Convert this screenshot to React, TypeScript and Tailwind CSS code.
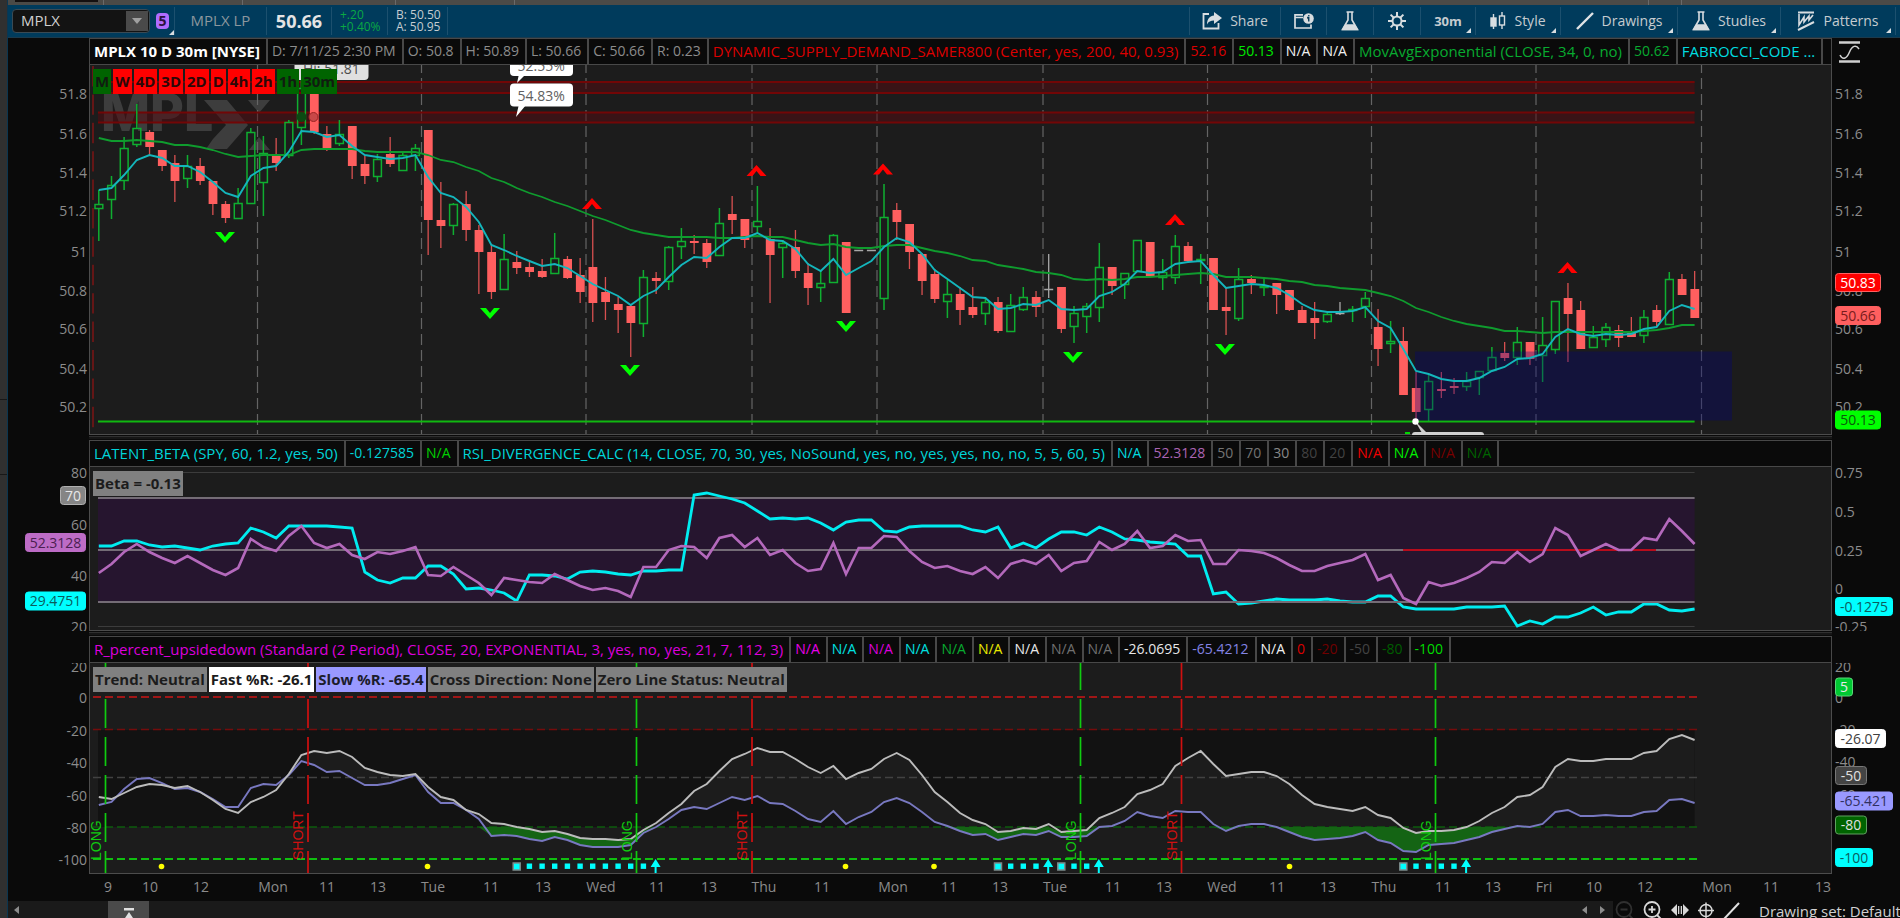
import React, { useState } from "react";

type Kind = "g" | "r" | "n";
// high, body top, body bottom, low, kind
type Candle = [number, number, number, number, Kind];

const X0 = 98.8;
const STEP = 12.665;
const px = (i: number) => Math.round((X0 + i * STEP) * 10) / 10;
const LAST = px(126);

const CANDLES: Candle[] = [
  [190, 204, 209, 241, "g"], [176, 185, 200, 219, "g"], [137, 148, 181, 190, "g"], [104, 128, 145, 147, "g"],
  [130, 132, 147, 156, "r"], [150, 150, 166, 171, "r"], [155, 163, 181, 202, "r"], [155, 166, 179, 188, "g"],
  [158, 166, 181, 185, "r"], [181, 181, 204, 215, "r"], [201, 204, 218, 223, "r"], [188, 203, 219, 219, "g"],
  [128, 132, 204, 204, "g"], [136, 153, 183, 216, "g"], [138, 156, 163, 171, "r"], [120, 122, 156, 158, "g"],
  [80, 88, 128, 145, "g"], [84, 91, 132, 134, "r"], [126, 134, 148, 151, "r"], [120, 134, 144, 146, "g"],
  [126, 126, 166, 179, "r"], [156, 164, 176, 184, "r"], [154, 159, 177, 182, "g"], [137, 154, 164, 167, "r"],
  [151, 155, 171, 171, "g"], [144, 148, 156, 171, "g"], [130, 130, 220, 255, "r"], [182, 220, 226, 248, "r"],
  [203, 204, 226, 235, "g"], [191, 204, 230, 241, "r"], [225, 230, 252, 294, "r"], [245, 252, 292, 299, "r"],
  [234, 259, 290, 290, "g"], [251, 262, 268, 274, "r"], [260, 267, 272, 277, "r"], [259, 271, 277, 278, "r"],
  [233, 258, 274, 274, "g"], [256, 259, 278, 279, "r"], [258, 275, 292, 303, "r"], [219, 267, 303, 322, "r"],
  [277, 292, 302, 320, "r"], [297, 304, 310, 333, "r"], [304, 306, 323, 357, "r"], [270, 277, 324, 337, "g"],
  [272, 278, 281, 294, "r"], [246, 247, 282, 290, "g"], [228, 241, 247, 259, "g"], [235, 241, 243, 254, "r"],
  [239, 243, 262, 268, "r"], [208, 223, 256, 256, "g"], [196, 214, 220, 234, "r"], [219, 219, 240, 248, "r"],
  [186, 221, 227, 233, "g"], [228, 239, 255, 303, "r"], [240, 243, 248, 278, "g"], [230, 247, 271, 278, "r"],
  [263, 273, 288, 305, "r"], [270, 283, 288, 302, "g"], [234, 235, 283, 283, "g"], [242, 242, 313, 313, "r"],
  [250, 250, 251, 251, "n"], [250, 250, 251, 251, "n"], [184, 217, 299, 310, "g"], [203, 210, 222, 240, "r"],
  [224, 224, 252, 269, "r"], [253, 254, 281, 295, "r"], [269, 274, 299, 303, "r"], [280, 294, 302, 318, "g"],
  [287, 294, 310, 325, "r"], [287, 307, 315, 318, "r"], [297, 302, 314, 325, "g"], [297, 302, 331, 333, "r"],
  [294, 305, 332, 332, "g"], [287, 297, 310, 311, "g"], [291, 297, 307, 317, "r"], [254, 289, 290, 298, "n"],
  [287, 287, 329, 333, "r"], [306, 313, 327, 343, "g"], [303, 306, 317, 333, "g"], [243, 267, 308, 322, "g"],
  [267, 267, 286, 295, "r"], [273, 273, 285, 299, "g"], [240, 240, 272, 272, "g"], [242, 242, 277, 277, "r"],
  [259, 272, 278, 290, "g"], [235, 246, 278, 284, "g"], [242, 246, 261, 263, "r"], [254, 259, 260, 284, "g"],
  [258, 258, 310, 310, "r"], [287, 307, 311, 335, "r"], [268, 279, 319, 321, "g"], [275, 279, 283, 294, "r"],
  [277, 286, 287, 296, "g"], [283, 283, 295, 314, "r"], [290, 290, 310, 311, "r"], [306, 310, 323, 323, "r"],
  [302, 318, 323, 339, "r"], [313, 314, 322, 323, "g"], [302, 313, 314, 315, "n"], [306, 309, 311, 322, "g"],
  [292, 298, 307, 318, "g"], [309, 327, 349, 366, "r"], [321, 341, 344, 353, "g"], [327, 341, 395, 395, "r"],
  [372, 388, 412, 421, "r"], [375, 381, 410, 421, "g"], [372, 389, 391, 398, "r"], [378, 386, 388, 394, "r"],
  [372, 381, 387, 391, "g"], [371, 371, 378, 395, "g"], [347, 357, 371, 371, "g"], [342, 353, 358, 361, "r"],
  [327, 342, 358, 365, "g"], [342, 342, 359, 365, "r"], [317, 345, 356, 382, "g"], [301, 301, 350, 354, "g"],
  [283, 298, 314, 362, "r"], [301, 310, 349, 349, "r"], [326, 337, 348, 348, "g"], [323, 327, 340, 347, "g"],
  [325, 330, 338, 347, "r"], [317, 333, 337, 337, "r"], [310, 317, 336, 343, "g"], [305, 310, 322, 327, "r"],
  [272, 279, 325, 325, "g"], [274, 279, 295, 295, "r"], [271, 289, 318, 318, "r"],
];

const FAST_MA = [
  190, 188, 175, 160, 155, 158, 166, 166, 172, 182, 193, 197, 176, 168, 166, 152, 131, 132, 137, 135, 146, 155, 157,
  159, 158, 155, 177, 193, 197, 207, 222, 245, 250, 256, 261, 266, 264, 268, 276, 284, 290, 296, 305, 296, 290, 277,
  265, 257, 258, 247, 238, 238, 233, 240, 241, 249, 264, 271, 259, 275, 268, 261, 247, 238, 242, 254, 270, 279, 288,
  297, 298, 309, 308, 304, 305, 300, 309, 310, 309, 296, 292, 284, 271, 273, 272, 264, 262, 261, 275, 288, 286, 284,
  285, 288, 295, 304, 310, 312, 312, 311, 307, 321, 328, 349, 371, 374, 379, 381, 381, 378, 371, 367, 359, 358, 354,
  337, 329, 334, 336, 334, 335, 334, 329, 327, 311, 305, 309,
];

const SLOW_MA = [
  138, 141, 141, 140, 141, 142, 145, 145, 147, 150, 154, 157, 156, 155, 155, 155, 150, 149, 149, 149, 149, 151, 152,
  152, 152, 152, 155, 160, 162, 167, 171, 178, 182, 188, 193, 197, 202, 206, 211, 216, 220, 225, 230, 233, 235, 237,
  237, 237, 237, 238, 238, 237, 236, 237, 237, 240, 243, 245, 244, 247, 248, 248, 246, 245, 245, 248, 251, 253, 256,
  260, 261, 265, 267, 269, 272, 273, 275, 279, 280, 279, 280, 279, 277, 277, 276, 275, 274, 273, 274, 277, 277, 277,
  278, 279, 281, 282, 285, 286, 288, 289, 290, 293, 296, 301, 308, 312, 317, 321, 324, 326, 328, 331, 331, 332, 333,
  332, 332, 332, 332, 332, 332, 332, 331, 330, 328, 325, 325,
];

const BETA = [
  546, 546, 541, 541, 545, 547, 546, 548, 550, 546, 544, 543, 528, 532, 538, 526, 526, 526, 526, 527, 528, 572, 580,
  583, 578, 578, 566, 566, 574, 589, 588, 590, 593, 601, 575, 575, 576, 579, 572, 571, 572, 574, 575, 571, 571, 570,
  570, 495, 493, 496, 499, 503, 511, 519, 518, 519, 518, 523, 530, 522, 520, 520, 531, 532, 527, 526, 526, 526, 526,
  530, 532, 527, 548, 543, 548, 539, 532, 532, 535, 527, 532, 539, 540, 542, 543, 544, 556, 556, 594, 592, 604, 603,
  601, 599, 600, 600, 600, 599, 601, 602, 602, 596, 596, 607, 609, 609, 609, 609, 607, 607, 607, 606, 626, 621, 624,
  617, 617, 613, 607, 615, 612, 612, 604, 604, 610, 611, 609,
];

const RSI = [
  573, 564, 552, 544, 552, 558, 563, 556, 563, 570, 575, 568, 539, 547, 551, 536, 526, 543, 548, 544, 555, 559, 552,
  554, 551, 547, 575, 576, 567, 575, 583, 595, 578, 580, 582, 583, 574, 580, 586, 590, 588, 591, 597, 567, 567, 550,
  546, 547, 558, 538, 535, 547, 538, 555, 550, 563, 571, 569, 543, 574, 548, 548, 536, 537, 551, 562, 568, 566, 571,
  574, 567, 578, 564, 560, 564, 555, 571, 563, 561, 542, 550, 544, 531, 548, 546, 535, 541, 540, 564, 564, 550, 551,
  553, 558, 565, 571, 571, 566, 563, 560, 554, 580, 575, 598, 604, 582, 586, 583, 578, 572, 562, 563, 552, 562, 554,
  528, 535, 556, 550, 544, 550, 550, 538, 540, 519, 531, 544,
];

const R_FAST = [
  797, 799, 793, 787, 784, 785, 788, 786, 792, 800, 809, 813, 802, 797, 790, 774, 755, 751, 753, 751, 757, 768, 772,
  775, 776, 774, 787, 797, 800, 810, 814, 823, 824, 827, 829, 832, 831, 834, 838, 839, 839, 840, 839, 830, 823, 813,
  804, 791, 784, 771, 759, 754, 748, 752, 752, 759, 767, 773, 766, 779, 773, 769, 759, 753, 760, 775, 792, 802, 813,
  820, 824, 832, 831, 828, 829, 824, 832, 831, 830, 818, 813, 807, 794, 790, 784, 766, 758, 751, 764, 776, 774, 772,
  772, 776, 784, 795, 804, 807, 809, 811, 807, 815, 818, 828, 833, 831, 831, 830, 827, 821, 813, 807, 797, 795, 787,
  767, 759, 761, 761, 759, 759, 759, 753, 751, 739, 735, 740,
];

const R_SLOW = [
  805, 802, 789, 779, 778, 783, 789, 788, 792, 799, 807, 807, 788, 784, 785, 775, 761, 765, 772, 771, 778, 785, 785,
  783, 779, 775, 792, 803, 803, 810, 819, 836, 835, 836, 839, 841, 837, 840, 845, 847, 847, 847, 845, 833, 827, 819,
  810, 807, 809, 803, 797, 800, 796, 803, 804, 811, 819, 822, 811, 824, 817, 812, 802, 798, 803, 812, 822, 826, 831,
  835, 834, 840, 837, 834, 835, 831, 837, 837, 836, 827, 826, 821, 812, 816, 818, 811, 812, 812, 824, 831, 826, 824,
  824, 827, 832, 837, 840, 839, 838, 836, 832, 840, 843, 851, 852, 845, 844, 843, 840, 837, 832, 829, 826, 827, 824,
  812, 810, 816, 816, 815, 816, 816, 812, 811, 800, 799, 803,
];

const DAY_LINES = [257.5, 421.5, 586, 752, 877, 1043, 1207.5, 1371.5, 1536, 1701.5];
const PRICE_TICKS: [string, number][] = [
  ["51.8", 94], ["51.6", 134], ["51.4", 173], ["51.2", 211], ["51", 252], ["50.8", 291], ["50.6", 329], ["50.4", 369], ["50.2", 407],
];
const UPS = [[592, 198], [756.5, 165], [883, 163.5], [1175, 214], [1567.5, 262]];
const DOWNS = [[225, 243], [490, 319], [630, 376], [846, 332], [1073, 363], [1225, 355]];
const TIMES: [string, number][] = [
  ["9", 108], ["10", 150], ["12", 201], ["Mon", 273], ["11", 327], ["13", 378], ["Tue", 433], ["11", 491], ["13", 543],
  ["Wed", 601], ["11", 657], ["13", 709], ["Thu", 764], ["11", 822], ["Mon", 893], ["11", 949], ["13", 1000],
  ["Tue", 1055], ["11", 1113], ["13", 1164], ["Wed", 1222], ["11", 1277], ["13", 1328], ["Thu", 1384], ["11", 1443],
  ["13", 1493], ["Fri", 1544], ["10", 1594], ["12", 1645], ["Mon", 1717], ["11", 1771], ["13", 1823],
];

type Cell = [string, string];
const PRICE_CELLS: Cell[] = [
  ["MPLX 10 D 30m [NYSE]", "text-[15px] text-white font-bold"],
  ["D: 7/11/25 2:30 PM", "text-[#8c8c8c]"],
  ["O: 50.8", "text-[#8c8c8c]"],
  ["H: 50.89", "text-[#8c8c8c]"],
  ["L: 50.66", "text-[#8c8c8c]"],
  ["C: 50.66", "text-[#8c8c8c]"],
  ["R: 0.23", "text-[#8c8c8c]"],
  ["DYNAMIC_SUPPLY_DEMAND_SAMER800 (Center, yes, 200, 40, 0.93)", "text-[15px] text-[#dc0000]"],
  ["52.16", "text-[#dc0000]"],
  ["50.13", "text-[#00e800]"],
  ["N/A", "text-[#f0f0f0]"],
  ["N/A", "text-[#f0f0f0]"],
  ["MovAvgExponential (CLOSE, 34, 0, no)", "text-[15px] text-[#08aa30]"],
  ["50.62", "text-[#08aa30]"],
  ["FABROCCI_CODE ...", "text-[15px] text-[#00dce0]"],
];
const RSI_CELLS: Cell[] = [
  ["LATENT_BETA (SPY, 60, 1.2, yes, 50)", "text-[15px] text-[#00d4d8]"],
  ["-0.127585", "text-[#00d4d8]"],
  ["N/A", "text-[#00d000]"],
  ["RSI_DIVERGENCE_CALC (14, CLOSE, 70, 30, yes, NoSound, yes, no, yes, yes, no, no, 5, 5, 60, 5)", "text-[15px] text-[#00d4d8]"],
  ["N/A", "text-[#00dce0]"],
  ["52.3128", "text-[#ac64b4]"],
  ["50", "text-[#747474]"],
  ["70", "text-[#747474]"],
  ["30", "text-[#888888]"],
  ["80", "text-[#424242]"],
  ["20", "text-[#424242]"],
  ["N/A", "text-[#f00000]"],
  ["N/A", "text-[#00f000]"],
  ["N/A", "text-[#780000]"],
  ["N/A", "text-[#006400]"],
];
const R_CELLS: Cell[] = [
  ["R_percent_upsidedown (Standard (2 Period), CLOSE, 20, EXPONENTIAL, 3, yes, no, yes, 21, 7, 112, 3)", "text-[15px] text-[#dc00dc]"],
  ["N/A", "text-[#e800e8]"],
  ["N/A", "text-[#00e0e0]"],
  ["N/A", "text-[#dc00dc]"],
  ["N/A", "text-[#00e0e0]"],
  ["N/A", "text-[#08aa30]"],
  ["N/A", "text-[#e8e800]"],
  ["N/A", "text-[#e8e8e8]"],
  ["N/A", "text-[#707070]"],
  ["N/A", "text-[#707070]"],
  ["-26.0695", "text-[#e8e8e8]"],
  ["-65.4212", "text-[#8484e4]"],
  ["N/A", "text-[#f0f0f0]"],
  ["0", "text-[#dc0000]"],
  ["-20", "text-[#700000]"],
  ["-50", "text-[#424242]"],
  ["-80", "text-[#005c00]"],
  ["-100", "text-[#00dc00]"],
];

const FRAMES: [string, boolean][] = [
  ["M", true], ["W", false], ["4D", false], ["3D", false], ["2D", false], ["D", false], ["4h", false], ["2h", false], ["1h", true], ["30m", true],
];

const line = (ys: number[]) => ys.map((y, i) => `${px(i)},${y}`).join(" ");
const band = (top: number[], bottom: number[]) =>
  `${line(top)} ${bottom.map((y, i) => `${px(i)},${y}`).reverse().join(" ")}`;

function StatusRow({ cells, children }: { cells: Cell[]; children?: React.ReactNode }) {
  return (
    <div className="flex h-[27px] bg-[#0a0a0a]">
      <div className="w-[81px] shrink-0" />
      <div className="flex flex-1 min-w-0 overflow-hidden border border-[#484848] whitespace-nowrap leading-6">
        {cells.map(([text, tone], i) => (
          <span key={i} className={`shrink-0 border-r-2 border-[#484848] pl-1 pr-1.5 leading-6 ${tone}`}>
            {text}
          </span>
        ))}
      </div>
      <div className="w-[68px] shrink-0 pl-[7px]">{children}</div>
    </div>
  );
}

function Splitter() {
  return (
    <div className="flex h-[5px] bg-[#0a0a0a]">
      <div className="ml-[81px] mr-[68px] my-px flex-1 border-t border-[#303030] bg-[#161616]" />
    </div>
  );
}

function Ticks({ items, x, end }: { items: [string, number][]; x: number; end?: boolean }) {
  return (
    <g fill="#8c8c8c" textAnchor={end ? "end" : "start"}>
      {items.map(([t, y]) => (
        <text key={t} x={x} y={y + 5}>
          {t}
        </text>
      ))}
    </g>
  );
}

function Tag(p: { x: number; y: number; w: number; text: string; bg: string; fg: string; edge?: string }) {
  return (
    <g>
      <rect x={p.x} y={p.y} width={p.w} height={18} rx={3} fill={p.bg} stroke={p.edge ?? p.bg} />
      <text x={p.x + p.w / 2} y={p.y + 14} fill={p.fg} textAnchor="middle">
        {p.text}
      </text>
    </g>
  );
}

function PlotFrame({ top, height }: { top: number; height: number }) {
  return (
    <>
      <rect x={8} y={top} width={1892} height={height} fill="#0a0a0a" />
      <rect x={89.5} y={top - 2} width={1742} height={height + 1.5} fill="#1c1c1c" stroke="#4c4c4c" />
    </>
  );
}

function PricePlot() {
  return (
    <svg viewBox="8 65 1892 370" className="block w-full" fontSize={14} role="img" aria-label="MPLX price">
      <PlotFrame top={65} height={370} />
      <Ticks items={PRICE_TICKS} x={87} end />
      <Ticks items={PRICE_TICKS} x={1835} />

      {/* logo watermark */}
      <g fill="#3d3d3d">
        <text x={101} y={131} fontSize={52} fontWeight={800} fontFamily="Inter, sans-serif">
          MPL
        </text>
        <path d="M204 100H227L248 125L227 149H206L213 139L226 125Z" />
        <path d="M248 100H270L259 113Z" />
        <path d="M249 150H270L259 137Z" />
      </g>

      <g stroke="#646464" strokeWidth={1.2} strokeDasharray="11 5" strokeDashoffset={2}>
        {DAY_LINES.map((x) => (
          <line key={x} x1={x} x2={x} y1={64} y2={434} />
        ))}
      </g>
      <line x1={93} x2={93} y1={64} y2={434} stroke="#7c1414" strokeWidth={1.5} strokeDasharray="20.4 8" strokeDashoffset={-2} />

      {/* supply zones */}
      {[[82, 93], [112.5, 122.5]].map(([a, b]) => (
        <g key={a}>
          <rect x={98} y={a} width={LAST - 98} height={b - a} fill="#560a10" fillOpacity={0.5} />
          <path d={`M98 ${a}H${LAST}M98 ${b}H${LAST}`} stroke="#720606" strokeWidth={2} />
        </g>
      ))}
      <rect x={98} y={420.5} width={LAST - 98} height={2} fill="#10b810" />

      {CANDLES.map(([h, t, b, l, k], i) => {
        const x = px(i);
        if (k === "n") {
          return <path key={i} d={`M${x} ${h}V${l}M${x - 4.5} ${t + 0.5}h9`} stroke="#a8a8a8" strokeWidth={1.3} />;
        }
        if (k === "r") {
          return (
            <g key={i} fill="#ff5f5f">
              <rect x={x - 0.6} y={h} width={1.3} height={l - h} fill="#d85050" />
              <rect x={x - 4.2} y={t} width={8.8} height={Math.max(b - t, 2)} />
            </g>
          );
        }
        return (
          <g key={i} stroke="#0fae30" strokeWidth={1.5} fill="none">
            <path d={`M${x} ${h}V${t}M${x} ${b}V${l}`} />
            <rect x={x - 3.8} y={t + 0.5} width={7.8} height={Math.max(b - t - 1, 1)} />
          </g>
        );
      })}
      <circle cx={301.5} cy={117} r={5} fill="#0b4a12" />
      <circle cx={313.5} cy={117} r={4.5} fill="#c84848" stroke="#9c2424" />

      {/* demand zone */}
      <rect x={1415} y={351.5} width={317} height={69} fill="#00007c" fillOpacity={0.32} />

      <polyline points={line(SLOW_MA)} fill="none" stroke="#0f9c2e" strokeWidth={1.8} />
      <polyline points={line(FAST_MA)} fill="none" stroke="#14b6bc" strokeWidth={1.9} />

      {UPS.map(([x, y]) => (
        <path key={x} d={`M${x - 10} ${y + 11}L${x} ${y}L${x + 10} ${y + 11}H${x + 4}L${x} ${y + 6}L${x - 4} ${y + 11}Z`} fill="#ff0000" />
      ))}
      {DOWNS.map(([x, y]) => (
        <path key={x} d={`M${x - 10} ${y - 11}L${x} ${y}L${x + 10} ${y - 11}H${x + 4}L${x} ${y - 6}L${x - 4} ${y - 11}Z`} fill="#00ff00" />
      ))}

      {/* callouts */}
      <rect x={294.5} y={54} width={74} height={26} rx={4} fill="#e0e0e0" />
      <text x={303} y={74} fill="#4c4c4c">Hi: 51.81</text>
      <path d="M519 74L517 83L525 75Z M519 104L516 117L526 105Z" fill="#ffffff" />
      <rect x={510} y={53} width={63} height={23} rx={4} fill="#ffffff" />
      <text x={517.5} y={71} fill="#606060">52.55%</text>
      <rect x={510} y={83.5} width={63} height={23} rx={4} fill="#ffffff" />
      <text x={517.5} y={101} fill="#606060">54.83%</text>
      <path d="M1415 421L1422 433H1427Z" fill="#d0d0d0" />
      <circle cx={1415.5} cy={421.5} r={3.2} fill="#ffffff" />
      <rect x={1412} y={432} width={72} height={6} rx={3} fill="#d0d0d0" />
      <rect x={1405} y={432} width={5} height={2} fill="#00d800" />

      <Tag x={1835.5} y={273.5} w={45} text="50.83" bg="#ff0000" fg="#ffffff" edge="#ff6060" />
      <Tag x={1835.5} y={306.5} w={45} text="50.66" bg="#ff5f5f" fg="#7a1c1c" />
      <Tag x={1835.5} y={411} w={45} text="50.13" bg="#00ff00" fg="#0b5a0b" />
    </svg>
  );
}

function RsiPlot() {
  return (
    <svg viewBox="8 467 1892 164" className="block w-full" fontSize={14} role="img" aria-label="Beta and RSI">
      <PlotFrame top={467} height={164} />
      <Ticks items={[["80", 473], ["60", 525], ["40", 576], ["20", 627]]} x={87} end />
      <Ticks items={[["0.75", 473], ["0.5", 512], ["0.25", 551], ["0", 589], ["-0.25", 627]]} x={1835} />
      <rect x={98} y={498} width={LAST - 98} height={104} fill="#26152f" />
      <path d={`M98 472.5H${LAST}M98 626.5H${LAST}`} stroke="#3c3c3c" />
      <path d={`M98 498H${LAST}M98 550H${LAST}`} stroke="#746c76" strokeWidth={1.8} />
      <polyline points={line(BETA)} fill="none" stroke="#00ecf0" strokeWidth={2.8} />
      <path d={`M98 602H${LAST}`} stroke="#746c76" strokeWidth={1.8} />
      <path d="M1403 550H1656" stroke="#b80c1c" strokeWidth={2} />
      <polyline points={line(RSI)} fill="none" stroke="#b469bc" strokeWidth={2.6} />
      <Tag x={60.5} y={486.5} w={25} text="70" bg="#858585" fg="#e8e8e8" edge="#b0b0b0" />
      <Tag x={25.5} y={533.5} w={60} text="52.3128" bg="#bd6cc6" fg="#4a2050" />
      <Tag x={25.5} y={592} w={60} text="29.4751" bg="#00ffff" fg="#0b5c5c" />
      <Tag x={1835.5} y={597.5} w={57} text="-0.1275" bg="#00ffff" fg="#0b5c5c" />
    </svg>
  );
}

function Signal({ x, label }: { x: number; label: "LONG" | "SHORT" }) {
  const color = label === "LONG" ? "#10cc10" : "#d01010";
  return (
    <g>
      <line x1={x} x2={x} y1={661} y2={873} stroke={color} strokeWidth={1.7} strokeDasharray="29 9" />
      <text
        transform={`translate(${x - 5} 860) rotate(-90)`}
        fill={color}
        fontSize={14}
        fontFamily="'Liberation Sans', Arial, sans-serif"
      >
        {label}
      </text>
    </g>
  );
}

const SQUARES = [34, 35, 36, 37, 38, 39, 40, 41, 42, 43, 72, 73, 74, 77, 78, 104, 105, 106, 107];
const SQUARE_STARTS = [33, 71, 76, 103];
const ARROWS = [44, 75, 79, 108];

function PercentRPlot() {
  const floor = (ys: number[]) => ys.map((y) => Math.max(y, 827));
  return (
    <svg viewBox="8 663 1892 238" className="block w-full" fontSize={14} role="img" aria-label="Percent R">
      <rect x={8} y={663} width={1892} height={238} fill="#0a0a0a" />
      <rect x={89.5} y={660} width={1742} height={213.5} fill="#1c1c1c" stroke="#4c4c4c" />
      <Ticks items={[["20", 667], ["0", 698], ["-20", 731], ["-40", 763], ["-60", 796], ["-80", 828], ["-100", 860]]} x={87} end />
      <Ticks items={[["20", 667], ["0", 698], ["-20", 730], ["-40", 762], ["-60", 795]]} x={1835} />

      <rect x={98} y={730} width={LAST - 98} height={97} fill="#121212" />
      <polygon points={band(R_FAST, R_SLOW.map((y, i) => Math.max(y, R_FAST[i])))} fill="#1c1c1c" />
      <g strokeDasharray="8 4" strokeWidth={1.7}>
        <path d="M93 697H1700" stroke="#cc1414" />
        <path d="M93 729.5H1700" stroke="#740c0c" />
        <path d="M93 777.5H1700" stroke="#424242" />
        <path d="M93 827H1700" stroke="#0c5c0c" />
      </g>
      <polygon points={band(floor(R_FAST), floor(R_SLOW))} fill="#146414" />
      <polyline points={line(R_SLOW)} fill="none" stroke="#7878c0" strokeWidth={1.9} />
      <polyline points={line(R_FAST)} fill="none" stroke="#bcbcbc" strokeWidth={1.9} />
      <path d="M93 859H1700" stroke="#10c010" strokeWidth={2} strokeDasharray="8 4" />

      {[105.5, 636.5, 1080.5, 1435.5].map((x) => (
        <Signal key={x} x={x} label="LONG" />
      ))}
      {[308, 752, 1181.5].map((x) => (
        <Signal key={x} x={x} label="SHORT" />
      ))}

      {[161.5, 427.5, 845.5, 934, 1289.5].map((x) => (
        <circle key={x} cx={x} cy={866.5} r={2.8} fill="#ffff00" />
      ))}
      {SQUARE_STARTS.map((i) => (
        <rect key={i} x={px(i) - 3.5} y={863} width={7} height={7} fill="#00ffff" stroke="#7c8c8c" strokeWidth={1.5} />
      ))}
      {SQUARES.map((i) => (
        <rect key={i} x={px(i) - 2.7} y={863.5} width={5.4} height={5.4} fill="#00ffff" />
      ))}
      {ARROWS.map((i) => (
        <path key={i} d={`M${px(i) - 0.5} 859l5 8h-4v6h-2v-6h-4z`} fill="#00ffff" />
      ))}

      <Tag x={1835.5} y={678} w={17} text="5" bg="#00c832" fg="#e8e8e8" edge="#58d878" />
      <Tag x={1835.5} y={729.5} w={50} text="-26.07" bg="#ffffff" fg="#404040" />
      <Tag x={1835.5} y={766.5} w={31} text="-50" bg="#444444" fg="#e0e0e0" edge="#787878" />
      <Tag x={1835.5} y={792} w={57} text="-65.421" bg="#9999ff" fg="#303060" />
      <Tag x={1835.5} y={816} w={31} text="-80" bg="#006400" fg="#e0e0e0" edge="#60a060" />
      <Tag x={1835.5} y={848.5} w={37} text="-100" bg="#00ffff" fg="#0b5c5c" />

      <g fill="#8c8c8c" textAnchor="middle">
        {TIMES.map(([t, x]) => (
          <text key={x} x={x} y={892}>
            {t}
          </text>
        ))}
      </g>
    </svg>
  );
}

function Flask() {
  return (
    <svg width="18" height="20" viewBox="0 0 18 20" fill="none" stroke="#d8dde0" strokeWidth="1.6">
      <path d="M5.5 1h7M7 1v8L1.5 18.5h15L11 9V1" />
      <path d="M4.5 14h9l2.5 4.5H2z" fill="#d8dde0" />
    </svg>
  );
}

function ToolButton({ label, text, menu, className = "", children }: {
  label: string;
  text?: string;
  menu?: boolean;
  className?: string;
  children?: React.ReactNode;
}) {
  return (
    <button
      aria-label={label}
      className={`relative flex h-7 shrink-0 items-center justify-center gap-2 border-l border-[#1c506e] ${className}`}
    >
      {children}
      {text && <span>{text}</span>}
      {menu && (
        <svg width="5" height="5" className="absolute right-1 bottom-0.5">
          <path d="M5 0V5H0Z" fill="#d8dde0" />
        </svg>
      )}
    </button>
  );
}

function Toolbar() {
  const [symbol, setSymbol] = useState("MPLX");
  return (
    <header className="flex h-[33px] items-center border-b border-[#1c3a4c] bg-[#003b5c] pl-1 text-[#c6ccd0] whitespace-nowrap">
      <div className="flex h-6 w-[138px] shrink-0 items-center rounded-sm border border-[#3a4a54] bg-[#131313] pr-px">
        <input
          aria-label="Symbol"
          value={symbol}
          onChange={(e) => setSymbol(e.target.value)}
          className="min-w-0 flex-1 bg-transparent pl-2 text-[15px] text-[#d0d0d0] outline-none"
        />
        <button aria-label="Symbol list" className="flex h-5 w-[22px] items-center justify-center bg-[#4a4a4a]">
          <svg width="10" height="6">
            <path d="M0 0H10L5 6Z" fill="#a0a0a0" />
          </svg>
        </button>
      </div>
      <button aria-label="Link color" className="relative ml-1.5 h-7 w-[18px] shrink-0">
        <span className="block w-[13px] rounded-sm bg-[#b06cff] text-center font-bold leading-4 text-[#2c1040]">5</span>
        <svg width="5" height="5" className="absolute right-0 bottom-0">
          <path d="M5 0V5H0Z" fill="#d8dde0" />
        </svg>
      </button>
      <span className="flex h-7 w-[92px] shrink-0 items-center justify-center border-l border-[#1c506e] text-[15px] text-[#8c979e]">MPLX LP</span>
      <span className="flex h-7 w-[65px] shrink-0 items-center justify-center border-l border-[#1c506e] text-lg font-bold text-[#e4e4e4]">
        50.66
      </span>
      <span className="h-7 w-14 shrink-0 border-l border-[#1c506e] pt-0.5 pl-2 text-xs leading-3 text-[#0aa844]">
        +.20
        <br />
        +0.40%
      </span>
      <span className="h-7 w-[61px] shrink-0 border-x border-[#1c506e] pt-0.5 pl-2 text-xs leading-3">
        B: 50.50
        <br />
        A: 50.95
      </span>
      <div className="flex-1" />
      <ToolButton label="Share" text="Share" className="w-[91px]">
        <svg width="20" height="18" viewBox="0 0 20 18">
          <path d="M7 2H1.5V16.5H16.5V11" fill="none" stroke="#d8dde0" strokeWidth="1.8" />
          <path d="M12 0L20 6L12 12V8.5C8.500 8.500 6.500 9.500 5 12.500C5 7 8 3.800 12 3.500Z" fill="#d8dde0" />
        </svg>
      </ToolButton>
      <ToolButton label="Alerts" className="w-[46px]">
        <svg width="20" height="16" viewBox="0 0 20 16">
          <path d="M9 1.800H1V15H17V11.500M1 4.500H9" fill="none" stroke="#d8dde0" strokeWidth="1.700" />
          <circle cx="14.500" cy="5.500" r="5.300" fill="#d8dde0" />
          <path d="M13.200 4.500H14.800V8.500M14.800 2V3.200" stroke="#003b5c" strokeWidth="1.300" />
        </svg>
      </ToolButton>
      <ToolButton label="Edit studies" className="w-[47px]">
        <Flask />
      </ToolButton>
      <ToolButton label="Chart settings" className="w-[47px]">
        <svg width="18" height="18" viewBox="0 0 18 18" fill="none" stroke="#d8dde0">
          <circle cx="9" cy="9" r="4.500" strokeWidth="2" />
          <path d="M9 0V4M9 14V18M0 9H4M14 9H18M2.600 2.600L5.500 5.500M12.500 12.500L15.400 15.400M15.400 2.600L12.500 5.500M5.500 12.500L2.600 15.400" strokeWidth="2" />
        </svg>
      </ToolButton>
      <ToolButton label="Time frame" menu text="30m" className="w-[55px] text-[13px] font-bold" />
      <ToolButton label="Style" menu text="Style" className="w-[85px]">
        <svg width="16" height="18" viewBox="0 0 16 18" stroke="#d8dde0" strokeWidth="1.400">
          <path d="M3.500 2V17M12 0V4M12 13V17" />
          <rect x="1" y="6" width="5" height="8" fill="#d8dde0" />
          <rect x="9.500" y="4" width="5" height="9" fill="none" />
        </svg>
      </ToolButton>
      <ToolButton label="Drawings" menu text="Drawings" className="w-[117px]">
        <svg width="18" height="18">
          <path d="M1 17L17 1" stroke="#e0e4e6" strokeWidth="2.400" />
        </svg>
      </ToolButton>
      <ToolButton label="Studies" menu text="Studies" className="w-[103px]">
        <Flask />
      </ToolButton>
      <ToolButton label="Patterns" menu text="Patterns" className="w-[115px]">
        <svg width="18" height="20" viewBox="0 0 18 20" fill="none" stroke="#d8dde0" strokeWidth="1.600">
          <path d="M1 1.500H17M1 19L17 11" strokeWidth="2" />
          <path d="M2 3V14L7 6V11L12 5V9L16 4" />
        </svg>
      </ToolButton>
      <div className="h-7 w-[5px] shrink-0 border-l border-[#1c506e]" />
    </header>
  );
}

function Chip({ text, tone }: { text: string; tone: string }) {
  return <span className={`h-[25px] px-0.5 text-[15px] leading-[25px] font-bold ${tone}`}>{text}</span>;
}

function BottomBar() {
  return (
    <footer className="flex h-[17px] overflow-hidden bg-[#0a0a0a]">
      <div className="flex flex-1 items-center bg-[#1a1a1a] pl-1.5">
        <button aria-label="Scroll left">
          <svg width="5" height="8" className="block">
            <path d="M5 0V8L0 4Z" fill="#8c8c8c" />
          </svg>
        </button>
        <button aria-label="Expand panel" className="ml-[89px] flex h-[17px] w-[41px] justify-center bg-[#4a4a4a] pt-[7px]">
          <svg width="10" height="10">
            <path d="M0 0H10V2.500H0Z M5 4L9 10H1Z" fill="#e0e0e0" />
          </svg>
        </button>
        <div className="flex-1" />
        <button aria-label="Back">
          <svg width="5" height="8" className="block">
            <path d="M5 0V8L0 4Z" fill="#8c8c8c" />
          </svg>
        </button>
        <button aria-label="Forward" className="mr-2 ml-[13px]">
          <svg width="5" height="8" className="block">
            <path d="M0 0V8L5 4Z" fill="#8c8c8c" />
          </svg>
        </button>
      </div>
      <div className="flex w-[287px] shrink-0 items-start gap-2 pl-0.5 text-[#d0d0d0] whitespace-nowrap">
        <svg width="20" height="20" viewBox="0 0 20 20" fill="none" stroke="#303030" strokeWidth="1.800" className="shrink-0">
          <circle cx="9" cy="8.500" r="7.500" />
          <path d="M5.500 8.500H12.500M14 14L19 19" />
        </svg>
        <svg width="20" height="20" viewBox="0 0 20 20" fill="none" stroke="#d8d8d8" strokeWidth="1.800" className="shrink-0">
          <circle cx="9" cy="8.500" r="7.500" />
          <path d="M5.500 8.500H12.500M9 5V12M14 14L19 19" />
        </svg>
        <svg width="18" height="18" viewBox="0 0 18 18" fill="#d8d8d8" className="shrink-0">
          <path d="M6 3V15L0 9ZM12 3V15L18 9ZM7 5H8.300V13H7ZM9.700 5H11V13H9.700Z" />
        </svg>
        <svg width="18" height="18" viewBox="0 0 18 18" fill="none" stroke="#d8d8d8" strokeWidth="1.500" className="shrink-0">
          <circle cx="9" cy="9.500" r="6" />
          <path d="M9 1.500V18M1 9.500H17" />
        </svg>
        <svg width="18" height="18" className="shrink-0">
          <path d="M1 18L16 2" stroke="#e0e0e0" strokeWidth="2" />
        </svg>
        <span className="ml-2.5 text-[15px] leading-5">Drawing set: Default</span>
      </div>
    </footer>
  );
}

export default function App() {
  return (
    <div className="flex min-h-screen overflow-hidden bg-[#0a0a0a] font-['Open_Sans','Noto_Sans',sans-serif] text-sm">
      {/* docked gadget edge */}
      <aside className="flex w-2 shrink-0 flex-col border-r border-[#0c3650] bg-[#303030]">
        <div className="h-[400px] border-b border-[#181818]" />
        <div className="h-[75px] border-b border-[#181818]" />
      </aside>

      <main className="min-w-0 flex-1">
        <div className="flex h-[5px] bg-[#4b4a47] pl-[7px]">
          <div className="h-0.5 w-[83px] bg-[#141010]" />
          <div className="ml-[5px] w-[140px] border-x border-[#6a6a6a]" />
          <div className="w-[153px] border-r border-[#6a6a6a]" />
          <div className="w-[119px] border-r border-[#6a6a6a]" />
          <div className="flex-1" />
          <div className="mr-[218px] w-[34px] border-x border-[#6a6a6a]" />
        </div>
        <Toolbar />

        <StatusRow cells={PRICE_CELLS}>
          <svg width="21" height="22" viewBox="0 0 21 22" fill="none" stroke="#d0d0d0" className="mt-[3px]">
            <path d="M0 1.500H21M0 20.500H21" strokeWidth="2.600" />
            <path d="M1 14C4 20 8 17 10.500 11S17 3 20 8" strokeWidth="1.500" />
          </svg>
        </StatusRow>
        <section className="relative">
          <PricePlot />
          <div className="absolute top-1 left-[85px] flex gap-0.5">
            {FRAMES.map(([t, up]) => (
              <Chip key={t} text={t} tone={up ? "bg-[#006400] text-[#101c10]" : "bg-[#ff0000] text-[#2c0808]"} />
            ))}
          </div>
        </section>
        <Splitter />

        <StatusRow cells={RSI_CELLS} />
        <section className="relative">
          <RsiPlot />
          <div className="absolute top-1 left-[85px] flex">
            <Chip text="Beta = -0.13" tone="bg-[#808080] text-[#1c1c1c]" />
          </div>
        </section>
        <Splitter />

        <StatusRow cells={R_CELLS} />
        <section className="relative">
          <PercentRPlot />
          <div className="absolute top-1 left-[85px] flex gap-0.5">
            <Chip text="Trend: Neutral" tone="bg-[#808080] text-[#1c1c1c]" />
            <Chip text="Fast %R: -26.1" tone="bg-white text-[#1c1c1c]" />
            <Chip text="Slow %R: -65.4" tone="bg-[#9999ff] text-[#1c1c2c]" />
            <Chip text="Cross Direction: None" tone="bg-[#808080] text-[#1c1c1c]" />
            <Chip text="Zero Line Status: Neutral" tone="bg-[#808080] text-[#1c1c1c]" />
          </div>
        </section>
        <BottomBar />
      </main>
    </div>
  );
}
